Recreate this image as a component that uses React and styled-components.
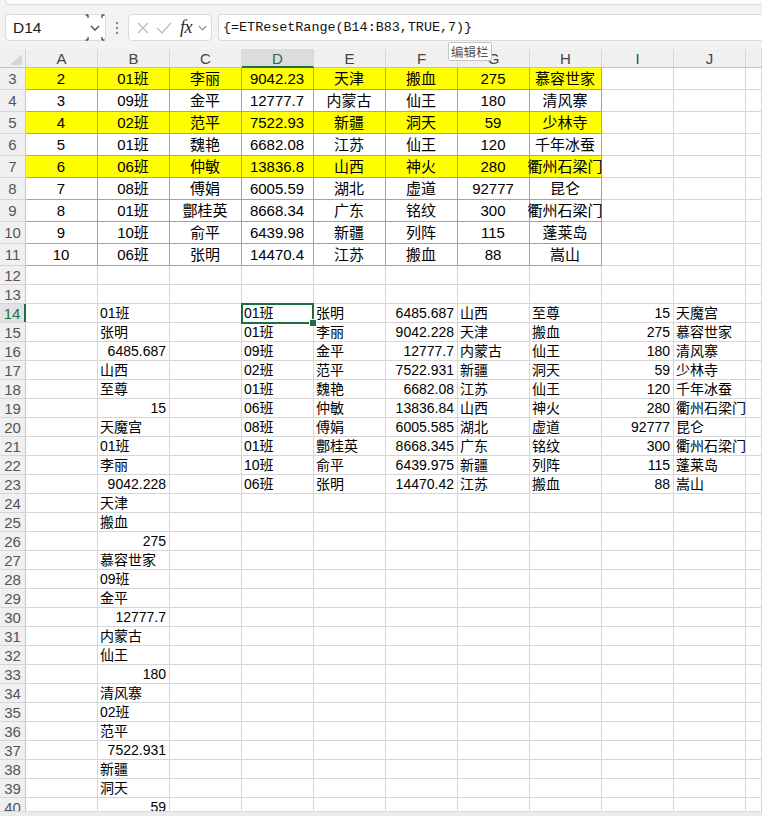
import React from "react";
import styled, { createGlobalStyle } from "styled-components";

const GlobalStyle = createGlobalStyle`
  body {
    margin: 0;
    background: #ffffff;
    overflow: hidden;
  }
`;

const CELL_FONT = `"Liberation Sans", "Noto Sans CJK SC", sans-serif`;
const GREEN = "#1f6e43";
const GRID_LINE = "#d6d6d6";
const EDGE_LINE = "#a3a3a3";

const Page = styled.div`
  position: relative;
  width: 762px;
  height: 816px;
  overflow: hidden;
  display: flex;
  flex-direction: column;
  font-family: ${CELL_FONT};
`;

const TopBar = styled.div`
  height: 49px;
  flex: none;
  background: #f3f3f3;
  display: flex;
  flex-direction: column;
`;

const RibbonEdge = styled.div`
  height: 5px;
  margin-left: 5px;
  background: #fbfbfb;
  border: 1px solid #dadada;
  border-top: none;
  border-right: none;
  border-radius: 0 0 0 6px;
  box-sizing: border-box;
`;

const FormulaRow = styled.div`
  margin-top: 9px;
  height: 27px;
  display: flex;
  align-items: stretch;
  padding-left: 5px;
`;

const Box = styled.div`
  background: #ffffff;
  border: 1px solid #dadada;
  border-radius: 4px;
  box-sizing: border-box;
  display: flex;
  align-items: center;
`;

const NameBox = styled(Box)`
  width: 101px;
`;

const NameText = styled.div`
  flex: 1;
  padding-left: 7px;
  font-size: 15.5px;
  color: #1a1a1a;
`;

const NameDrop = styled.div`
  width: 20px;
  height: 100%;
  display: flex;
  align-items: center;
  justify-content: center;
`;

const Dots = styled.div`
  width: 22px;
  display: flex;
  align-items: center;
  justify-content: center;
`;

const FxBox = styled(Box)`
  width: 84px;
  padding-left: 7px;
  gap: 6px;
`;

const FxLabel = styled.span`
  font-family: "Liberation Serif", serif;
  font-style: italic;
  font-size: 18px;
  color: #2a2a2a;
  margin-left: 2px;
  letter-spacing: -0.5px;
`;

const FormulaBox = styled(Box)`
  flex: 1;
  margin-left: 6px;
  border-right: none;
  border-radius: 4px 0 0 4px;
  padding-left: 4px;
  font-family: "Liberation Mono", monospace;
  font-size: 13.4px;
  color: #111;
`;

const Tip = styled.div`
  position: absolute;
  left: 448px;
  top: 42px;
  padding: 0 2px;
  height: 19px;
  line-height: 18px;
  background: #ffffff;
  border: 1px solid #c4c4c4;
  border-radius: 2px;
  font-family: "Noto Sans CJK SC", sans-serif;
  font-size: 12.5px;
  color: #555;
  box-sizing: border-box;
  z-index: 3;
`;

const Sheet = styled.div`
  flex: 1;
  min-height: 0;
  overflow: hidden;
`;

// every row draws its own bottom gridline
const Row = styled.div`
  display: flex;
  height: ${(p) => p.$h}px;
  box-sizing: border-box;
  border-bottom: 1px solid ${(p) => p.$line || GRID_LINE};
  line-height: 1;
`;

const Corner = styled.div`
  width: 26px;
  flex: none;
  background: #f0f0f0;
  border-right: 1px solid #d4d4d4;
  box-sizing: border-box;
  display: flex;
  align-items: flex-end;
  justify-content: flex-end;
  padding: 0 3px 2px 0;
`;

const ColHead = styled.div`
  width: ${(p) => (p.$rest ? "auto" : "72px")};
  flex: ${(p) => (p.$rest ? "1" : "none")};
  background: ${(p) => (p.$active ? "#dcdcdc" : "#f0f0f0")};
  color: ${(p) => (p.$active ? GREEN : "#444")};
  border-right: 1px solid #d8d8d8;
  ${(p) => p.$active && `border-bottom: 2px solid ${GREEN}; margin-bottom: -1px;`}
  box-sizing: border-box;
  display: flex;
  align-items: center;
  justify-content: center;
  font-size: 15px;
  padding-top: 1px;
`;

const RowHead = styled.div`
  width: 26px;
  flex: none;
  background: ${(p) => (p.$active ? "#e2e2e2" : "#f0f0f0")};
  color: ${(p) => (p.$active ? GREEN : "#555")};
  border-right: ${(p) => (p.$active ? `2px solid ${GREEN}` : "1px solid #c8c8c8")};
  box-sizing: border-box;
  display: flex;
  align-items: center;
  justify-content: center;
  font-size: 15px;
`;

const Cell = styled.div`
  width: ${(p) => (p.$rest ? "auto" : "72px")};
  flex: ${(p) => (p.$rest ? "1" : "none")};
  background: ${(p) => (p.$yellow ? "#ffff00" : "#ffffff")};
  border-right: 1px solid ${(p) => (p.$edge ? EDGE_LINE : GRID_LINE)};
  ${(p) => p.$edge && `border-bottom: 1px solid ${EDGE_LINE}; margin-bottom: -1px;`}
  box-sizing: border-box;
  display: flex;
  align-items: center;
  justify-content: ${(p) =>
    p.$align === "center" ? "center" : p.$align === "right" ? "flex-end" : "flex-start"};
  padding: 0 3px 0 2px;
  font-size: ${(p) => (p.$big ? 15 : 14)}px;
  color: #000;
  white-space: nowrap;
  overflow: visible;

  ${(p) =>
    p.$selected &&
    `
    position: relative;
    z-index: 2;
    &::after {
      content: "";
      position: absolute;
      left: -1px;
      top: -1px;
      right: -1px;
      bottom: -2px;
      border: 2px solid ${GREEN};
      pointer-events: none;
    }
    &::before {
      content: "";
      position: absolute;
      right: -4px;
      bottom: -5px;
      width: 6px;
      height: 6px;
      background: ${GREEN};
      border: 1px solid #fff;
      z-index: 2;
    }
  `}
`;

const ScrollEdge = styled.div`
  height: 4px;
  flex: none;
  background: #ebebeb;
  border-top: 1px solid #dadada;
`;

const COLS = ["A", "B", "C", "D", "E", "F", "G", "H", "I", "J"];

const table = [
  [2, "01班", "李丽", "9042.23", "天津", "搬血", 275, "慕容世家"],
  [3, "09班", "金平", "12777.7", "内蒙古", "仙王", 180, "清风寨"],
  [4, "02班", "范平", "7522.93", "新疆", "洞天", 59, "少林寺"],
  [5, "01班", "魏艳", "6682.08", "江苏", "仙王", 120, "千年冰蚕"],
  [6, "06班", "仲敏", "13836.8", "山西", "神火", 280, "衢州石梁门"],
  [7, "08班", "傅娟", "6005.59", "湖北", "虚道", 92777, "昆仑"],
  [8, "01班", "酆桂英", "8668.34", "广东", "铭纹", 300, "衢州石梁门"],
  [9, "10班", "俞平", "6439.98", "新疆", "列阵", 115, "蓬莱岛"],
  [10, "06班", "张明", "14470.4", "江苏", "搬血", 88, "嵩山"],
];

const result = [
  ["01班", "张明", "6485.687", "山西", "至尊", 15, "天魔宫"],
  ["01班", "李丽", "9042.228", "天津", "搬血", 275, "慕容世家"],
  ["09班", "金平", "12777.7", "内蒙古", "仙王", 180, "清风寨"],
  ["02班", "范平", "7522.931", "新疆", "洞天", 59, "少林寺"],
  ["01班", "魏艳", "6682.08", "江苏", "仙王", 120, "千年冰蚕"],
  ["06班", "仲敏", "13836.84", "山西", "神火", 280, "衢州石梁门"],
  ["08班", "傅娟", "6005.585", "湖北", "虚道", 92777, "昆仑"],
  ["01班", "酆桂英", "8668.345", "广东", "铭纹", 300, "衢州石梁门"],
  ["10班", "俞平", "6439.975", "新疆", "列阵", 115, "蓬莱岛"],
  ["06班", "张明", "14470.42", "江苏", "搬血", 88, "嵩山"],
];

const listB = result.flatMap((r) => [r[0], r[1], r[2], r[3], r[4], r[5], r[6]]);

const isNum = (v) => /^[\d.]+$/.test(String(v));

const Chevron = ({ w = 10, color = "#555" }) => (
  <svg width={w} height={6} viewBox="0 0 10 6">
    <polyline points="1,1 5,5 9,1" fill="none" stroke={color} strokeWidth="1.2" />
  </svg>
);

const FormulaBar = () => (
  <TopBar>
    <RibbonEdge />
    <FormulaRow>
      <NameBox>
        <NameText>D14</NameText>
        <NameDrop>
          <svg width="20" height="27" viewBox="0 0 20 27">
            <path d="M3 4 V1 H0.5 M3 23 V26 H0.5 M17 4 V1 H19.5 M17 23 V26 H19.5" fill="none" stroke="#111" strokeWidth="1" />
            <polyline points="6,12 10,16 14,12" fill="none" stroke="#444" strokeWidth="1.3" />
          </svg>
        </NameDrop>
      </NameBox>
      <Dots>
        <svg width="4" height="14" viewBox="0 0 4 14">
          <circle cx="2" cy="2" r="1.2" fill="#8a8a8a" />
          <circle cx="2" cy="7" r="1.2" fill="#8a8a8a" />
          <circle cx="2" cy="12" r="1.2" fill="#8a8a8a" />
        </svg>
      </Dots>
      <FxBox>
        <svg width="14" height="14" viewBox="0 0 14 14">
          <path d="M2 2 L12 12 M12 2 L2 12" stroke="#b8b8b8" strokeWidth="1.2" />
        </svg>
        <svg width="16" height="14" viewBox="0 0 16 14">
          <polyline points="1,7 6,12 15,2" fill="none" stroke="#b8b8b8" strokeWidth="1.2" />
        </svg>
        <FxLabel>fx</FxLabel>
        <Chevron w={9} color="#777" />
      </FxBox>
      <FormulaBox>{"{=ETResetRange(B14:B83,TRUE,7)}"}</FormulaBox>
    </FormulaRow>
  </TopBar>
);

const HeaderRow = () => (
  <Row $h={19} $line="#c0c0c0">
    <Corner>
      <svg width="12" height="11" viewBox="0 0 12 11">
        <polygon points="12,0 12,11 0,11" fill="#d6d6d6" />
      </svg>
    </Corner>
    {COLS.map((c) => (
      <ColHead key={c} $active={c === "D"}>
        {c}
      </ColHead>
    ))}
    <ColHead $rest />
  </Row>
);

const TableRows = () =>
  table.map((vals, i) => {
    const n = i + 3;
    const yellow = n === 3 || n === 5 || n === 7;
    return (
      <Row key={n} $h={22}>
        <RowHead>{n}</RowHead>
        {COLS.map((c, ci) =>
          ci < 8 ? (
            <Cell key={c} $edge $yellow={yellow} $align="center" $big>
              {vals[ci]}
            </Cell>
          ) : (
            <Cell key={c} />
          )
        )}
        <Cell $rest />
      </Row>
    );
  });

const lowerValue = (n, c) => {
  if (c === "B" && n >= 14) return listB[n - 14];
  const k = "DEFGHIJ".indexOf(c);
  if (k >= 0 && n >= 14 && n <= 23) return result[n - 14][k];
  return "";
};

const LowerRows = () =>
  Array.from({ length: 29 }, (_, i) => i + 12).map((n) => (
    <Row key={n} $h={19}>
      <RowHead $active={n === 14}>{n}</RowHead>
      {COLS.map((c) => {
        const v = lowerValue(n, c);
        return (
          <Cell key={c} $align={isNum(v) ? "right" : "left"} $selected={n === 14 && c === "D"}>
            {v}
          </Cell>
        );
      })}
      <Cell $rest />
    </Row>
  ));

export default function App() {
  return (
    <Page>
      <GlobalStyle />
      <FormulaBar />
      <Sheet>
        <HeaderRow />
        <TableRows />
        <LowerRows />
      </Sheet>
      <ScrollEdge />
      <Tip>编辑栏</Tip>
    </Page>
  );
}
